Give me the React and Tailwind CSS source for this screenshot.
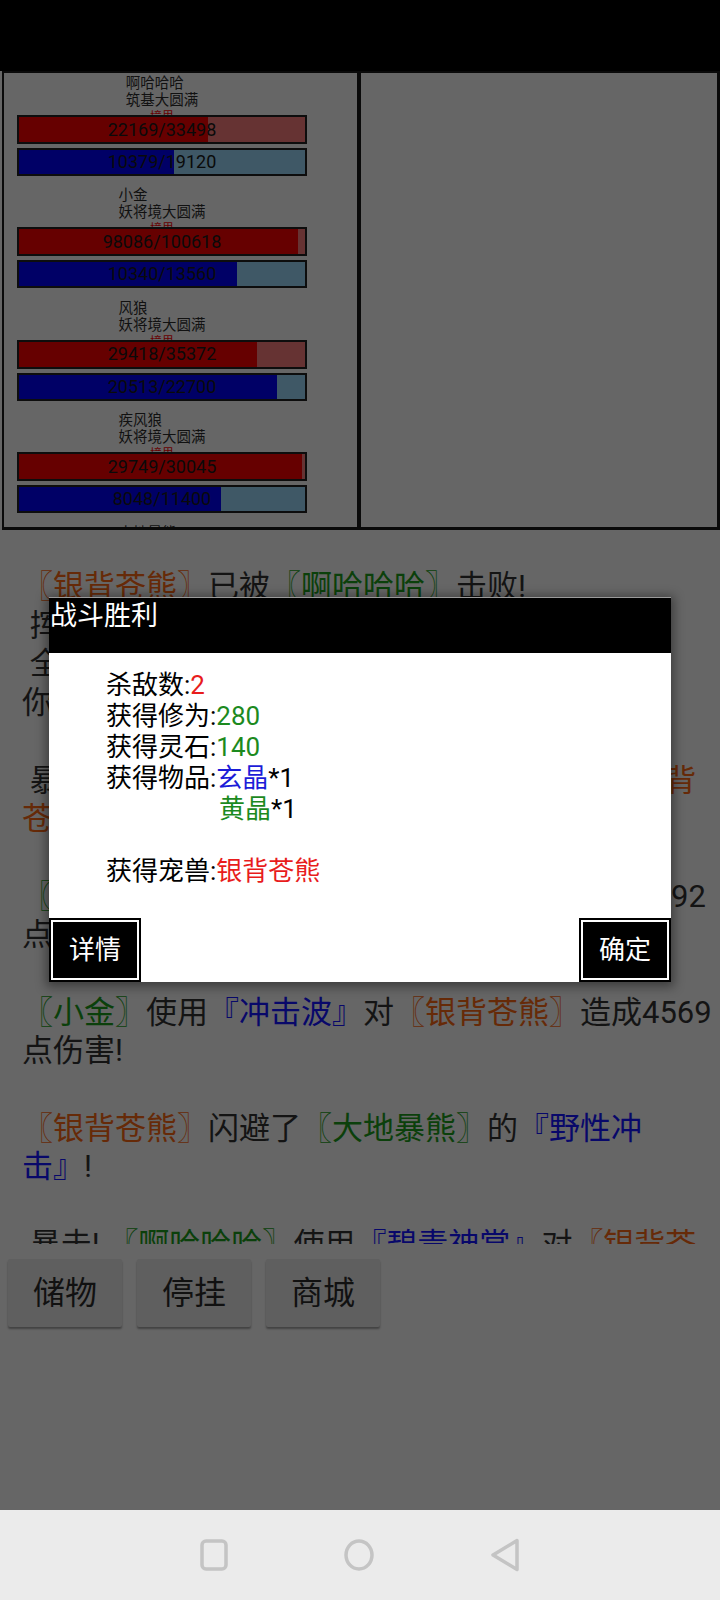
import React from "react";

const FONT = "font-['Roboto','Noto_Sans_CJK_SC',sans-serif]";

const O = "text-[#662a08]";
const G = "text-[#0b400b]";
const B = "text-[#08086a]";
const K = "text-[#141414]";

const units = [
  { name: "啊哈哈哈", realm: "筑基大圆满", hp: [22169, 33498], mp: [10379, 19120] },
  { name: "小金", realm: "妖将境大圆满", hp: [98086, 100618], mp: [10340, 13560] },
  { name: "风狼", realm: "妖将境大圆满", hp: [29418, 35372], mp: [20513, 22700] },
  { name: "疾风狼", realm: "妖将境大圆满", hp: [29749, 30045], mp: [8048, 11400] },
  { name: "大地暴熊", realm: "妖将境大圆满", hp: [41200, 41200], mp: [9800, 12000] },
];

const log = [
  [["〖银背苍熊〗", O], ["已被", K], ["〖啊哈哈哈〗", G], ["击败!", K]],
  [[" 挥剑斩落，战斗结束！", K]],
  [[" 全体成员获得修为280点", K]],
  [["你获得了灵石140枚", K]],
  null,
  [[" 暴击! ", K], ["〖大地暴熊〗", G], ["使用了", K], ["『野性冲击』", B], ["对", K], ["〖银背", O]],
  [["苍熊〗", O], ["造成12875点伤害!", K]],
  null,
  [["〖风狼〗", G], ["使用", K], ["『撕咬』", B], ["对", K], ["〖银背苍熊〗", O], ["造成 12592", K]],
  [["点伤害!", K]],
  null,
  [["〖小金〗", G], ["使用", K], ["『冲击波』", B], ["对", K], ["〖银背苍熊〗", O], ["造成4569", K]],
  [["点伤害!", K]],
  null,
  [["〖银背苍熊〗", O], ["闪避了", K], ["〖大地暴熊〗", G], ["的", K], ["『野性冲", B]],
  [["击』", B], ["!", K]],
  null,
  [[" 暴击! ", K], ["〖啊哈哈哈〗", G], ["使用", K], ["『碧青神掌』", B], ["对", K], ["〖银背苍", O]],
];

function Bar({ value, max, fill, empty, h }) {
  const pct = (value / max) * 100;
  return (
    <div className={`grid w-full ${h} border-2 border-[#0d0d0d] ${empty}`}>
      <div className={`col-start-1 row-start-1 h-full ${fill}`} style={{ width: `${pct}%` }} />
      <div className="col-start-1 row-start-1 flex items-center justify-center text-[18px] leading-none text-[#0a0a0a]">
        {value}/{max}
      </div>
    </div>
  );
}

function Unit({ u }) {
  return (
    <div className="ml-[13px] flex w-[290px] flex-col items-center pb-[11.4px]">
      <div className="text-left text-[14.5px] leading-[17px] text-[#111]">
        <div>{u.name}</div>
        <div>{u.realm}</div>
      </div>
      <div className="h-[6px] overflow-hidden pt-[2px] text-[12px] leading-[12px] text-[#660000]">境界</div>
      <Bar value={u.hp[0]} max={u.hp[1]} h="h-[29px]" fill="bg-[#660000]" empty="bg-[#663333]" />
      <div className="h-[4px]" />
      <Bar value={u.mp[0]} max={u.mp[1]} h="h-[28px]" fill="bg-[#000066]" empty="bg-[#3f5866]" />
    </div>
  );
}

function DialogButton({ children }) {
  return (
    <div className="h-[64px] w-[92px] bg-black p-[2px]">
      <div className="flex h-full w-full items-center justify-center border-2 border-white bg-black text-[26px] text-white">
        {children}
      </div>
    </div>
  );
}

export default function App() {
  return (
    <div className={`relative flex h-[1600px] w-[720px] flex-col overflow-hidden bg-[#666666] ${FONT}`}>
      <div className="h-[71px] shrink-0 bg-black" />

      <div className="flex h-[459px] shrink-0 pl-[2px]">
        <div className="w-[357px] overflow-hidden border-2 border-b-[3px] border-[#0a0a0a] pt-[2px]">
          {units.map((u) => (
            <Unit key={u.name} u={u} />
          ))}
        </div>
        <div className="flex-1 border-2 border-b-[3px] border-r-[3px] border-[#0a0a0a]" />
      </div>

      <div className="h-[714px] shrink-0 overflow-hidden pl-[22px] pt-[38px] text-[31px] leading-[38.7px]">
        {log.map((line, i) =>
          line ? (
            <div key={i} className="whitespace-pre">
              {line.map(([t, c], j) => (
                <span key={j} className={c}>
                  {t}
                </span>
              ))}
            </div>
          ) : (
            <div key={i} className="h-[38.7px]" />
          )
        )}
      </div>

      <div className="mt-[15px] flex shrink-0 gap-[15px] pl-[8px]">
        {["储物", "停挂", "商城"].map((t) => (
          <div
            key={t}
            className="flex h-[68px] w-[114px] items-center justify-center rounded-[2px] bg-[#5f5f5f] text-[32px] text-[#111] shadow-[0_2px_2px_rgba(0,0,0,0.35)]"
          >
            {t}
          </div>
        ))}
      </div>

      <div className="flex-1" />

      <div className="flex h-[90px] shrink-0 items-center justify-center gap-[116px] bg-[#ebebeb]">
        <svg width="28" height="32" viewBox="0 0 28 32">
          <rect x="2" y="2" width="24" height="28" rx="4" fill="none" stroke="#c4c4c4" strokeWidth="3.5" />
        </svg>
        <svg width="30" height="32" viewBox="0 0 30 32">
          <ellipse cx="15" cy="16" rx="13" ry="14" fill="none" stroke="#c4c4c4" strokeWidth="3.5" />
        </svg>
        <svg width="30" height="34" viewBox="0 0 30 34">
          <path d="M27 2.5 L3 17 L27 31.5 Z" fill="none" stroke="#c4c4c4" strokeWidth="3.5" strokeLinejoin="round" />
        </svg>
      </div>

      <div className="absolute left-[49px] top-[597px] w-[622px] bg-white shadow-[0_2px_10px_3px_rgba(0,0,0,0.4)]">
        <div className="h-[56px] border-t border-[#9a9a9a] bg-black pl-[1px] text-[27px] leading-[36px] text-white">
          战斗胜利
        </div>
        <div className="pl-[57px] pt-[16.5px] text-[26px] leading-[31px] text-black">
          <div>
            杀敌数:<span className="text-[#e81c1c]">2</span>
          </div>
          <div>
            获得修为:<span className="text-[#1c8a1e]">280</span>
          </div>
          <div>
            获得灵石:<span className="text-[#1c8a1e]">140</span>
          </div>
          <div>
            获得物品:<span className="text-[#1c1cd8]">玄晶</span>*1
          </div>
          <div className="pl-[113px]">
            <span className="text-[#1c8a1e]">黄晶</span>*1
          </div>
          <div className="h-[31px]" />
          <div>
            获得宠兽:<span className="text-[#e81c1c]">银背苍熊</span>
          </div>
        </div>
        <div className="mt-[31.5px] flex justify-between">
          <DialogButton>详情</DialogButton>
          <DialogButton>确定</DialogButton>
        </div>
      </div>
    </div>
  );
}
